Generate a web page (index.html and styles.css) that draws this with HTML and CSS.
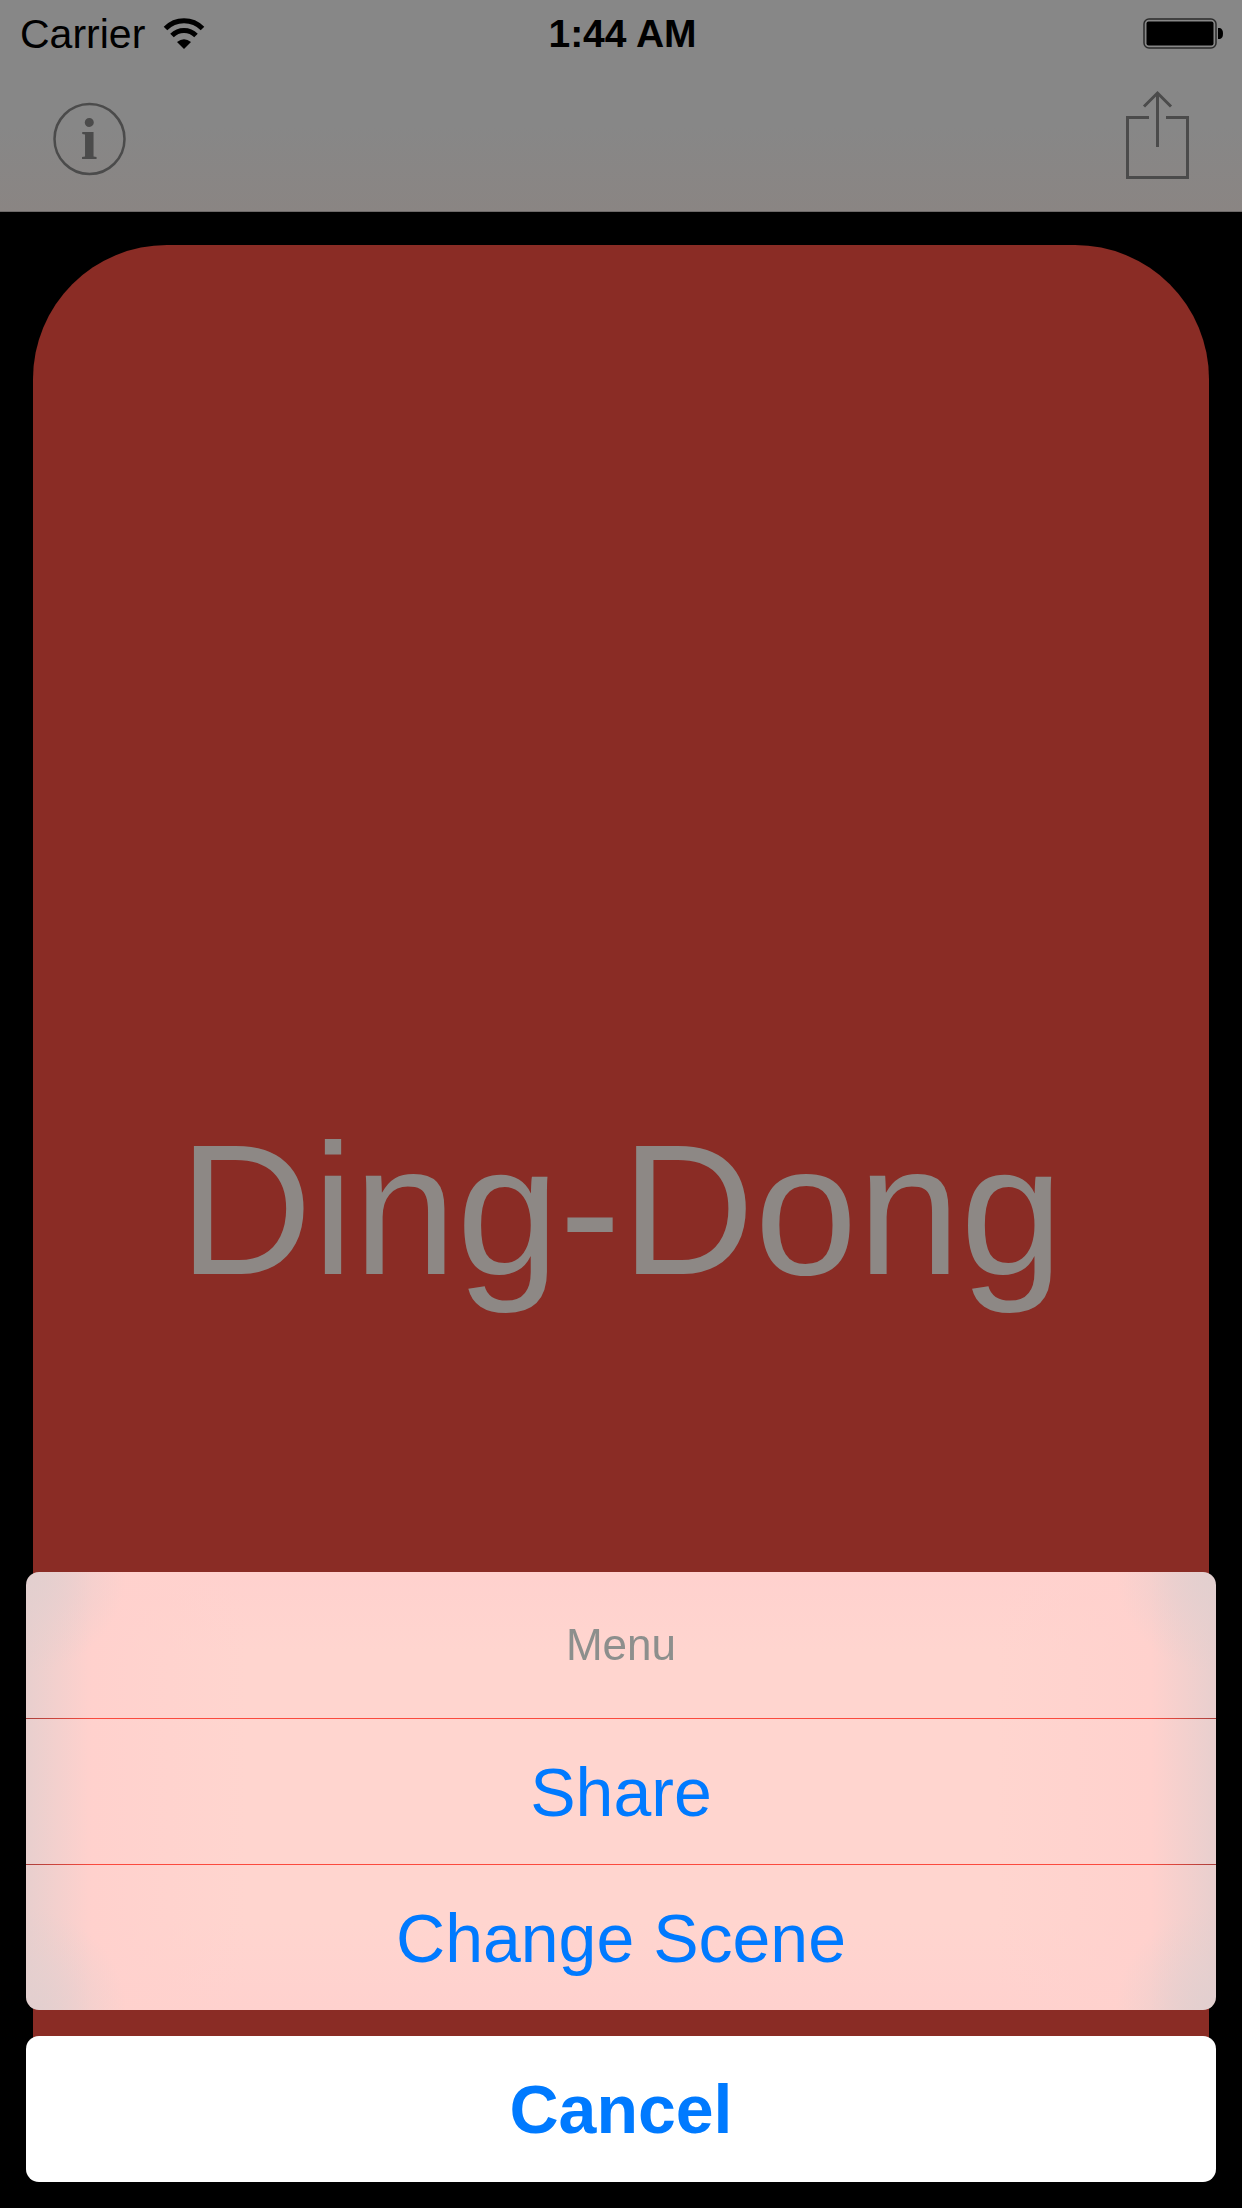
FILE: index.html
```html
<!DOCTYPE html>
<html lang="en">
<head>
    <meta charset="UTF-8">
    <meta name="viewport" content="width=device-width, initial-scale=1.0">
    <title>Ding-Dong</title>
    <link rel="stylesheet" href="styles.css">
</head>
<body>
    <header class="top">
        <div class="status-bar">
            <div class="carrier">
                <span>Carrier</span>
                <svg class="wifi" width="42" height="32" viewBox="0 0 42 32">
                    <path d="M2.500 10.500a26 26 0 0 1 37 0" fill="none" stroke="#000" stroke-width="5"/>
                    <path d="M9 17.500a17 17 0 0 1 24 0" fill="none" stroke="#000" stroke-width="5"/>
                    <path d="M21 31l-7-7q7-5.500 14 0z"/>
                </svg>
            </div>
            <span class="time">1:44 AM</span>
            <div class="battery">
                <svg width="82" height="32" viewBox="0 0 82 32">
                    <rect x="1" y="1" width="72" height="29" rx="5" fill="none" stroke="#2b2b2b" stroke-width="1.500"/>
                    <rect x="3.500" y="3.500" width="67" height="24" rx="2"/>
                    <path d="M75 10h2q3 1 3 5.500t-3 5.500h-2z"/>
                </svg>
            </div>
        </div>
        <nav class="toolbar">
            <button class="icon-button" aria-label="Info">
                <svg width="74" height="90" viewBox="0 0 74 90">
                    <circle cx="37.500" cy="49" r="35" fill="none" stroke="#4b4b4b" stroke-width="2.500"/>
                    <text class="info-mark" x="37" y="69" text-anchor="middle">i</text>
                </svg>
            </button>
            <button class="icon-button" aria-label="Share">
                <svg width="64" height="90" viewBox="0 0 64 90" fill="none" stroke="#4b4b4b" stroke-width="3">
                    <path d="M23 27.500H1.500v60h60v-60H40"/>
                    <path d="M31.500 57V3M18 16.500L31.500 3 45 16.500"/>
                </svg>
            </button>
        </nav>
    </header>

    <main class="scene">
        <h1>Ding-Dong</h1>
    </main>

    <!-- action sheet -->
    <div class="sheet" role="dialog" aria-labelledby="sheet-title">
        <div class="sheet-group">
            <h2 class="sheet-title" id="sheet-title">Menu</h2>
            <button class="sheet-button">Share</button>
            <button class="sheet-button">Change Scene</button>
        </div>
        <button class="sheet-button cancel">Cancel</button>
    </div>
</body>
</html>
```

FILE: styles.css
```css
* {
    box-sizing: border-box;
}

body {
    margin: 0;
    min-height: 100vh;
    display: flex;
    flex-direction: column;
    background-color: #000;
    font-family: "Liberation Sans", Arial, sans-serif;
}

.top {
    height: 212px;
    background: linear-gradient(#878787 60%, #8a8583);
    border-bottom: 1px solid #6e6a69;
}

/* carrier, clock, battery */
.status-bar {
    display: grid;
    grid-template-columns: 1fr auto 1fr;
    align-items: center;
    height: 68px;
    padding: 0 17px 0 20px;
    font-size: 41px;
    line-height: 68px;
}

.carrier {
    display: flex;
    align-items: center;
    gap: 18px;
}

.time {
    font-size: 39px;
    font-weight: bold;
}

.battery {
    display: flex;
    justify-content: flex-end;
}

.toolbar {
    display: flex;
    justify-content: space-between;
    padding: 22px 52px 0;
}

.icon-button {
    padding: 0;
    border: 0;
    background: none;
}

.icon-button svg {
    display: block;
}

.info-mark {
    fill: #4b4b4b;
    font-family: "Liberation Serif", serif;
    font-size: 60px;
    font-weight: bold;
}

.scene {
    flex: 1;
    display: flex;
    align-items: center;
    justify-content: center;
    margin: 33px;
    border-radius: 134px;
    background-color: #8a2c25;
}

.scene h1 {
    margin: 0;
    color: #8d8885;
    font-size: 185px;
    font-weight: normal;
}

.sheet {
    position: fixed;
    left: 0;
    right: 0;
    bottom: 0;
    display: flex;
    flex-direction: column;
    gap: 26px;
    padding: 26px;
}

.sheet-group {
    border-radius: 13px;
    overflow: hidden;
    background:
        radial-gradient(circle at 0 0, #e2cfcf, transparent 100px),
        radial-gradient(circle at 100% 0, #e2cfcf, transparent 100px),
        radial-gradient(circle at 0 100%, #e2cfcf, transparent 100px),
        radial-gradient(circle at 100% 100%, #e2cfcf, transparent 100px),
        linear-gradient(90deg, #e8cfce, #ffd1cd 65px, transparent 220px),
        linear-gradient(270deg, #e8cfce, #ffd1cd 65px, transparent 220px),
        linear-gradient(#ffd1ce, #ffd5cf 80px, #ffd5cf 350px, #ffd1ce);
}

.sheet-title,
.sheet-button {
    display: block;
    width: 100%;
    height: 146px;
    margin: 0;
    padding: 0;
    font-family: inherit;
    font-weight: normal;
    text-align: center;
}

.sheet-title {
    color: #8d8f8d;
    font-size: 44px;
    line-height: 146px;
}

.sheet-button {
    border: 0;
    border-top: 1px solid #fb4a3e;
    border-image: linear-gradient(90deg, #a8403c, #fb4a3e 70px, #fb4a3e calc(100% - 70px), #a8403c) 1;
    background: none;
    color: #007aff;
    font-size: 68px;
}

.cancel {
    border: 0;
    border-radius: 13px;
    background-color: #fff;
    font-weight: bold;
}
```
